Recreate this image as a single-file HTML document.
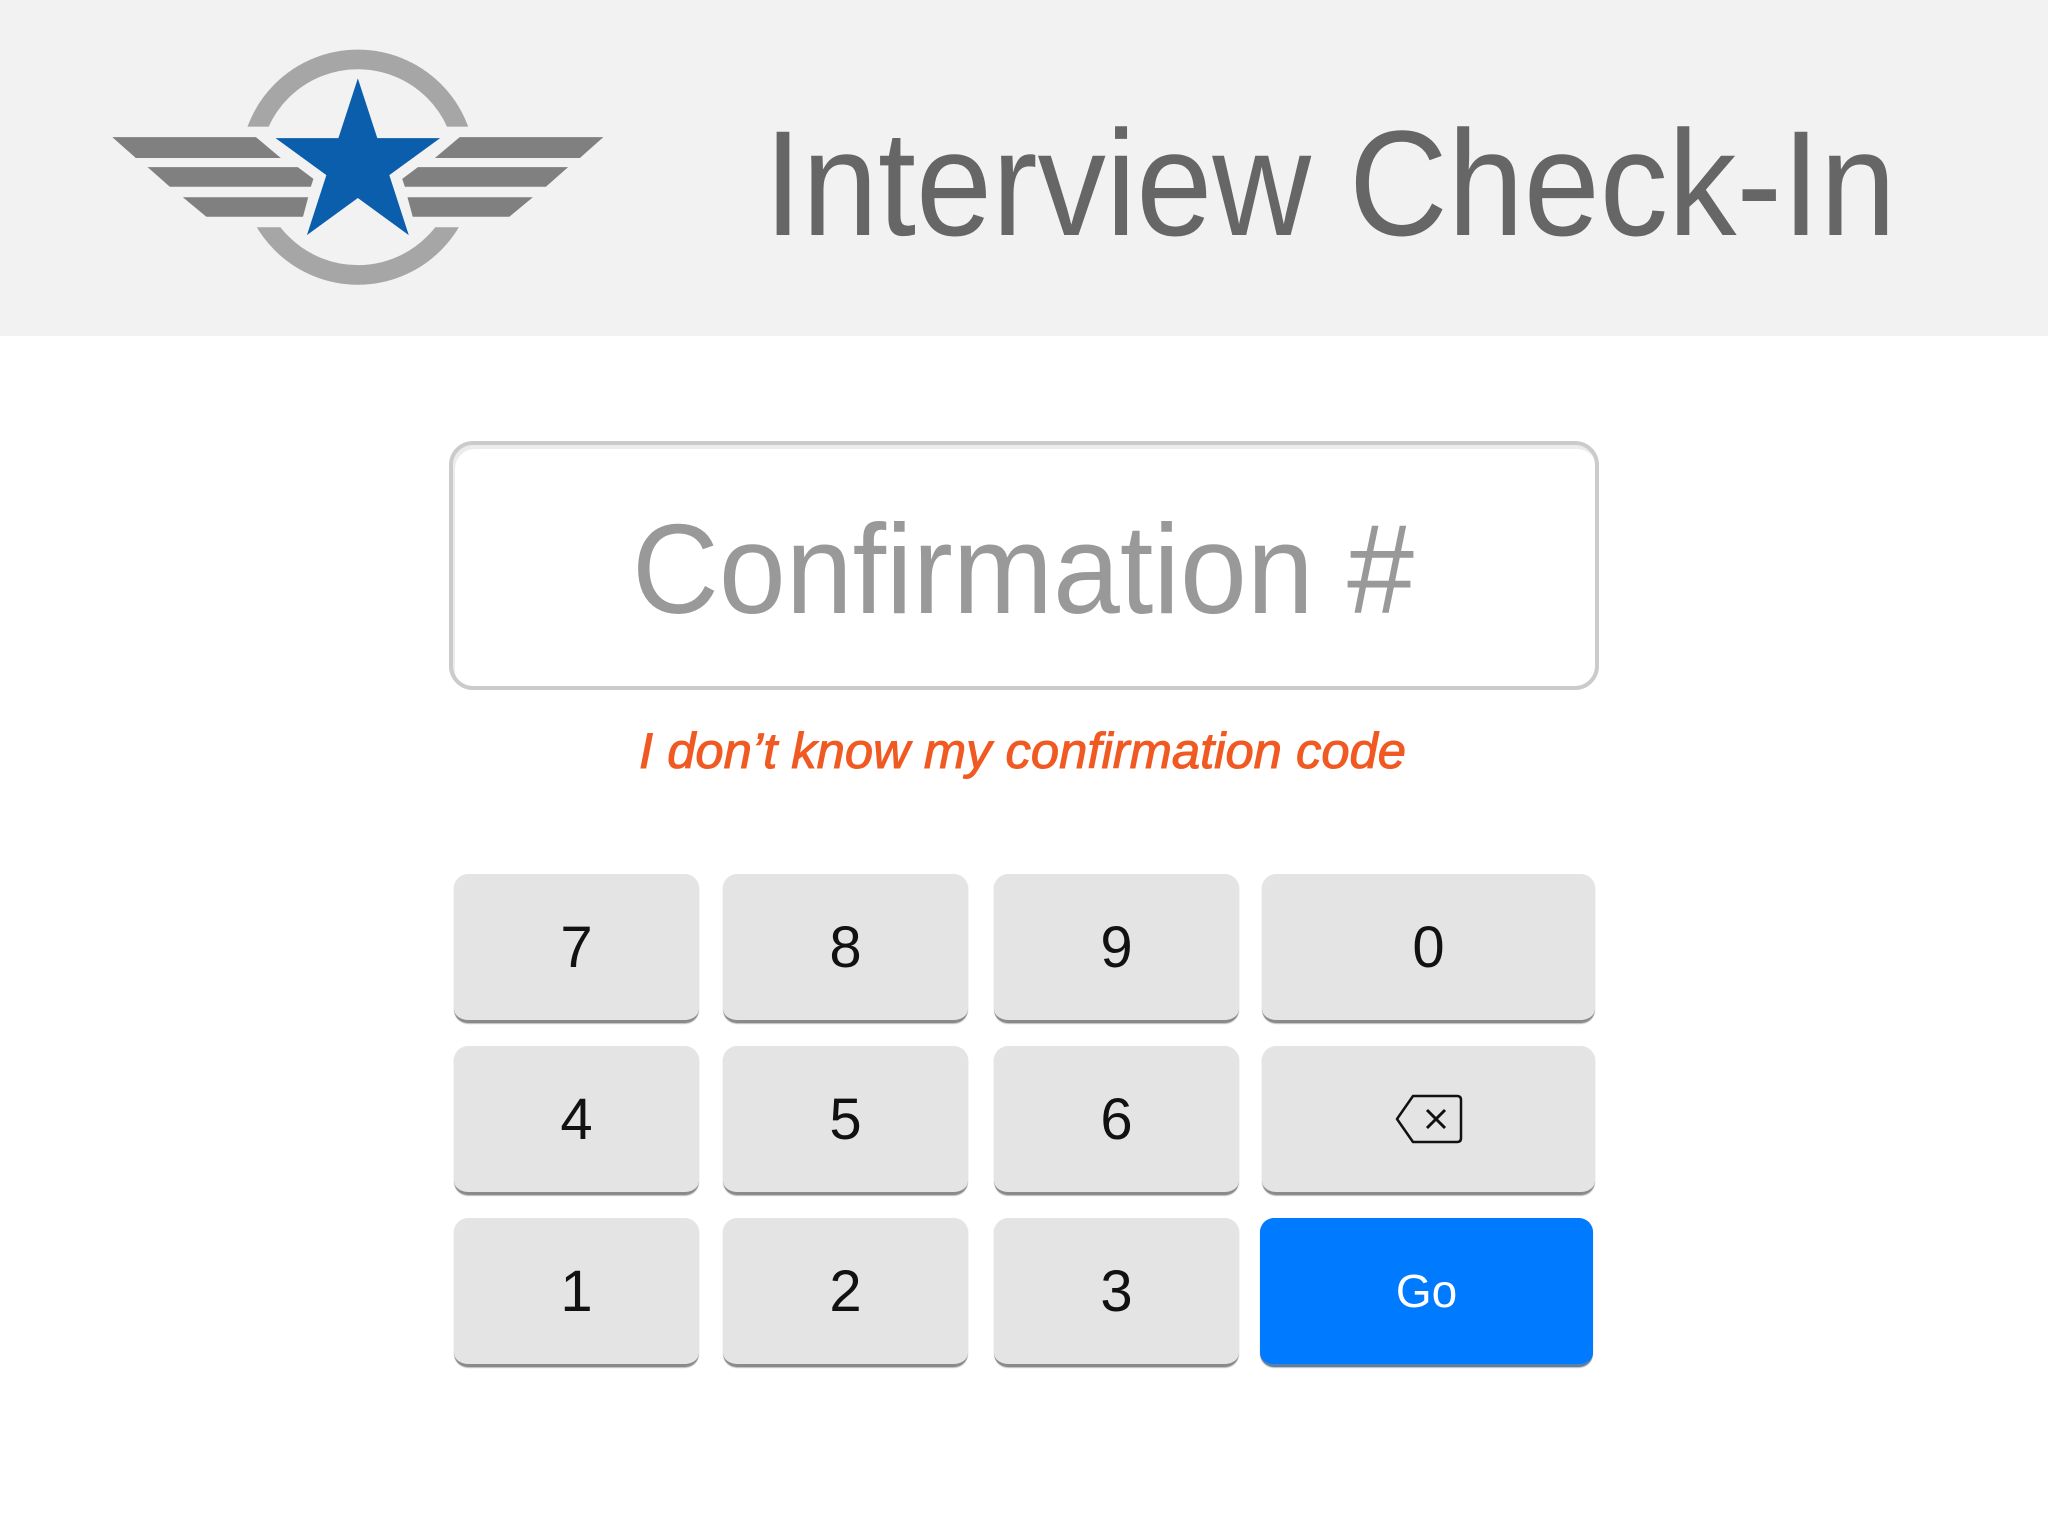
<!DOCTYPE html>
<html><head><meta charset="utf-8"><style>
html,body{margin:0;padding:0;width:2048px;height:1536px;background:#fff;overflow:hidden;font-family:"Liberation Sans",sans-serif}
.hdr{position:absolute;left:0;top:0;width:2048px;height:336px;background:#f2f2f2}
.key{position:absolute;width:245px;height:146px;background:#e4e4e4;border-radius:14px;border-bottom:3px solid #8a8a8a;box-shadow:0 1px 1px #bbb;display:flex;align-items:center;justify-content:center;font-size:58px;color:#111}
.go{background:#007aff;color:#fff;border-bottom-color:#5a7fa8;font-size:46px}
</style></head><body>
<div class="hdr"></div>
<svg style="position:absolute;left:0;top:0" width="2048" height="336">
 <g transform="scale(1.306)">
  <circle cx="274" cy="128" r="82.5" fill="none" stroke="#a6a6a6" stroke-width="15"/>
  <rect x="180" y="97" width="190" height="77" fill="#f2f2f2"/>
  <g fill="#808080">
   <path d="M86 105 L196 105 L215 121 L104 121 Z"/>
   <path d="M113 128 L228 128 L240 137 L238 143 L130 143 Z"/>
   <path d="M140 151 L236 151 L232 166 L158 166 Z"/>
   <path d="M462 105 L352 105 L333 121 L444 121 Z"/>
   <path d="M435 128 L320 128 L308 137 L310 143 L418 143 Z"/>
   <path d="M408 151 L312 151 L316 166 L390 166 Z"/>
  </g>
  <path fill="#0a5eab" stroke="#f2f2f2" stroke-width="7" stroke-linejoin="round" d="M274 60 L288.9 105.8 L337 105.8 L298.1 134.1 L313 180 L274 151.6 L235 180 L249.9 134.1 L211 105.8 L259.1 105.8 Z"/>
  <path fill="#0a5eab" d="M274 60 L288.9 105.8 L337 105.8 L298.1 134.1 L313 180 L274 151.6 L235 180 L249.9 134.1 L211 105.8 L259.1 105.8 Z"/>
 </g>
 <text x="764" y="235" font-size="150" fill="#666" textLength="1132" lengthAdjust="spacingAndGlyphs" font-family="Liberation Sans">Interview Check-In</text>
</svg>
<div style="position:absolute;left:449px;top:441px;width:1142px;height:241px;border:4px solid #cbcbcb;border-radius:24px;box-shadow:inset 2px 4px 0 #ececec"></div>
<svg style="position:absolute;left:0;top:0" width="2048" height="800">
 <text x="632" y="613" font-size="127" fill="#999" textLength="782" lengthAdjust="spacingAndGlyphs" font-family="Liberation Sans">Confirmation #</text>
 <text x="639" y="768" font-size="50" fill="#f05a22" stroke="#f05a22" stroke-width="1" font-style="italic" textLength="767" lengthAdjust="spacingAndGlyphs" font-family="Liberation Sans">I don’t know my confirmation code</text>
</svg>
<div class="key" style="left:454px;top:874px">7</div>
<div class="key" style="left:723px;top:874px">8</div>
<div class="key" style="left:994px;top:874px">9</div>
<div class="key" style="left:1262px;top:874px;width:333px">0</div>
<div class="key" style="left:454px;top:1046px">4</div>
<div class="key" style="left:723px;top:1046px">5</div>
<div class="key" style="left:994px;top:1046px">6</div>
<div class="key" style="left:1262px;top:1046px;width:333px"><svg width="68" height="50" viewBox="0 0 68 50"><path d="M18 2 L62 2 Q66 2 66 6 L66 44 Q66 48 62 48 L18 48 L2 25 Z" fill="none" stroke="#111" stroke-width="2.5" stroke-linejoin="round"/><path d="M32 16 L50 34 M50 16 L32 34" stroke="#111" stroke-width="3"/></svg></div>
<div class="key" style="left:454px;top:1218px">1</div>
<div class="key" style="left:723px;top:1218px">2</div>
<div class="key" style="left:994px;top:1218px">3</div>
<div class="key go" style="left:1260px;top:1218px;width:333px">Go</div>
</body></html>
